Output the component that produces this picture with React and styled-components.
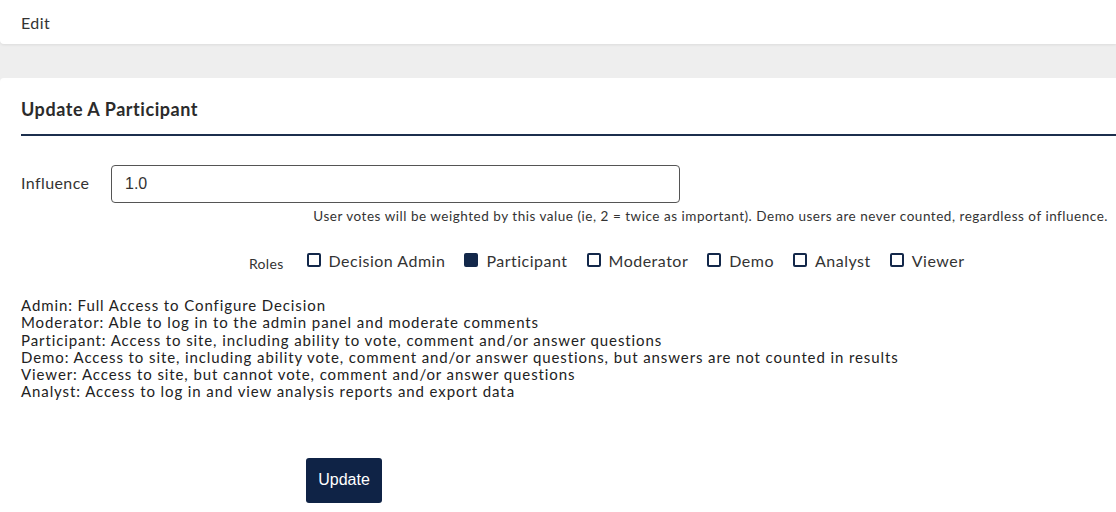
import React from "react";
import styled, { createGlobalStyle } from "styled-components";

const GlobalStyle = createGlobalStyle`
  body {
    margin: 0;
    background: #eeeeee;
    font-family: Lato, "Open Sans", sans-serif;
    color: #333;
  }
`;

const roles = [
  { name: "Decision Admin", checked: false },
  { name: "Participant", checked: true },
  { name: "Moderator", checked: false },
  { name: "Demo", checked: false },
  { name: "Analyst", checked: false },
  { name: "Viewer", checked: false },
];

const notes = [
  "Admin: Full Access to Configure Decision",
  "Moderator: Able to log in to the admin panel and moderate comments",
  "Participant: Access to site, including ability to vote, comment and/or answer questions",
  "Demo: Access to site, including ability vote, comment and/or answer questions, but answers are not counted in results",
  "Viewer: Access to site, but cannot vote, comment and/or answer questions",
  "Analyst: Access to log in and view analysis reports and export data",
];

const App = () => {
  return (
    <Page>
      <GlobalStyle />
      <TopBar>Edit</TopBar>
      <Panel>
        <Title>Update A Participant</Title>
        <FieldRow>
          <Label>Influence</Label>
          <Input defaultValue="1.0" />
        </FieldRow>
        <Help>
          User votes will be weighted by this value (ie, 2 = twice as important). Demo users are never counted, regardless of influence.
        </Help>
        <RolesRow>
          <RolesLabel>Roles</RolesLabel>
          {roles.map((r) => (
            <Role key={r.name}>
              <Box $checked={r.checked} />
              {r.name}
            </Role>
          ))}
        </RolesRow>
        <Notes>
          {notes.map((n) => (
            <div key={n}>{n}</div>
          ))}
        </Notes>
        <ButtonRow>
          <UpdateButton>Update</UpdateButton>
        </ButtonRow>
      </Panel>
    </Page>
  );
};

const Page = styled.div`
  width: 1116px;
  height: 512px;
  overflow: hidden;
`;

const TopBar = styled.div`
  height: 44px;
  background: #fff;
  box-shadow: 0 1px 3px rgba(0, 0, 0, 0.08);
  padding-left: 21px;
  display: flex;
  align-items: center;
  font-size: 16px;
  letter-spacing: 0.4px;
  color: #333;
  border-bottom-left-radius: 4px;
`;

const Panel = styled.div`
  margin-top: 34px;
  background: #fff;
  border-top-left-radius: 4px;
  padding: 0 0 40px 21px;
  min-height: 440px;
`;

const Title = styled.div`
  font-weight: 700;
  font-size: 18px;
  letter-spacing: 0.55px;
  line-height: 23px;
  color: #2b2b2b;
  padding-top: 20px;
  height: 36px;
  border-bottom: 2px solid #1c2f4d;
`;

const FieldRow = styled.div`
  display: flex;
  align-items: center;
  margin-top: 29px;
`;

const Label = styled.div`
  width: 90px;
  font-size: 16px;
  letter-spacing: 0.4px;
  color: #333;
  margin-top: -3px;
`;

const Input = styled.input`
  width: 569px;
  height: 38px;
  box-sizing: border-box;
  border: 1px solid #555;
  border-radius: 4px;
  padding: 0 13px;
  font-family: "Liberation Sans", Arial, sans-serif;
  font-size: 16px;
  color: #333;
  outline: none;
`;

const Help = styled.div`
  text-align: right;
  padding-right: 8px;
  font-size: 13.5px;
  letter-spacing: 0.52px;
  line-height: 18px;
  color: #333;
  margin-top: 4px;
`;

const RolesRow = styled.div`
  display: flex;
  align-items: center;
  height: 20px;
  padding-left: 228px;
  margin-top: 25px;
`;

const RolesLabel = styled.span`
  font-size: 14px;
  letter-spacing: 0.3px;
  margin-right: 23px;
  margin-top: 6px;
`;

const Role = styled.label`
  display: flex;
  align-items: center;
  gap: 8px;
  font-size: 16px;
  letter-spacing: 0.5px;
  color: #333;
  margin-right: 19px;
`;

const Box = styled.span`
  width: 10px;
  height: 10px;
  border: 2px solid #13284a;
  border-radius: 2px;
  background: ${(p) => (p.$checked ? "#13284a" : "#fff")};
`;

const Notes = styled.div`
  margin-top: 27px;
  font-size: 15px;
  letter-spacing: 0.9px;
  line-height: 17.3px;
  color: #222;
`;

const ButtonRow = styled.div`
  padding-left: 285px;
  margin-top: 57px;
`;

const UpdateButton = styled.button`
  width: 76px;
  height: 45px;
  border: none;
  border-radius: 3px;
  background: #0f2346;
  color: #fff;
  font-family: "Liberation Sans", Arial, sans-serif;
  font-size: 16px;
`;

export default App;
